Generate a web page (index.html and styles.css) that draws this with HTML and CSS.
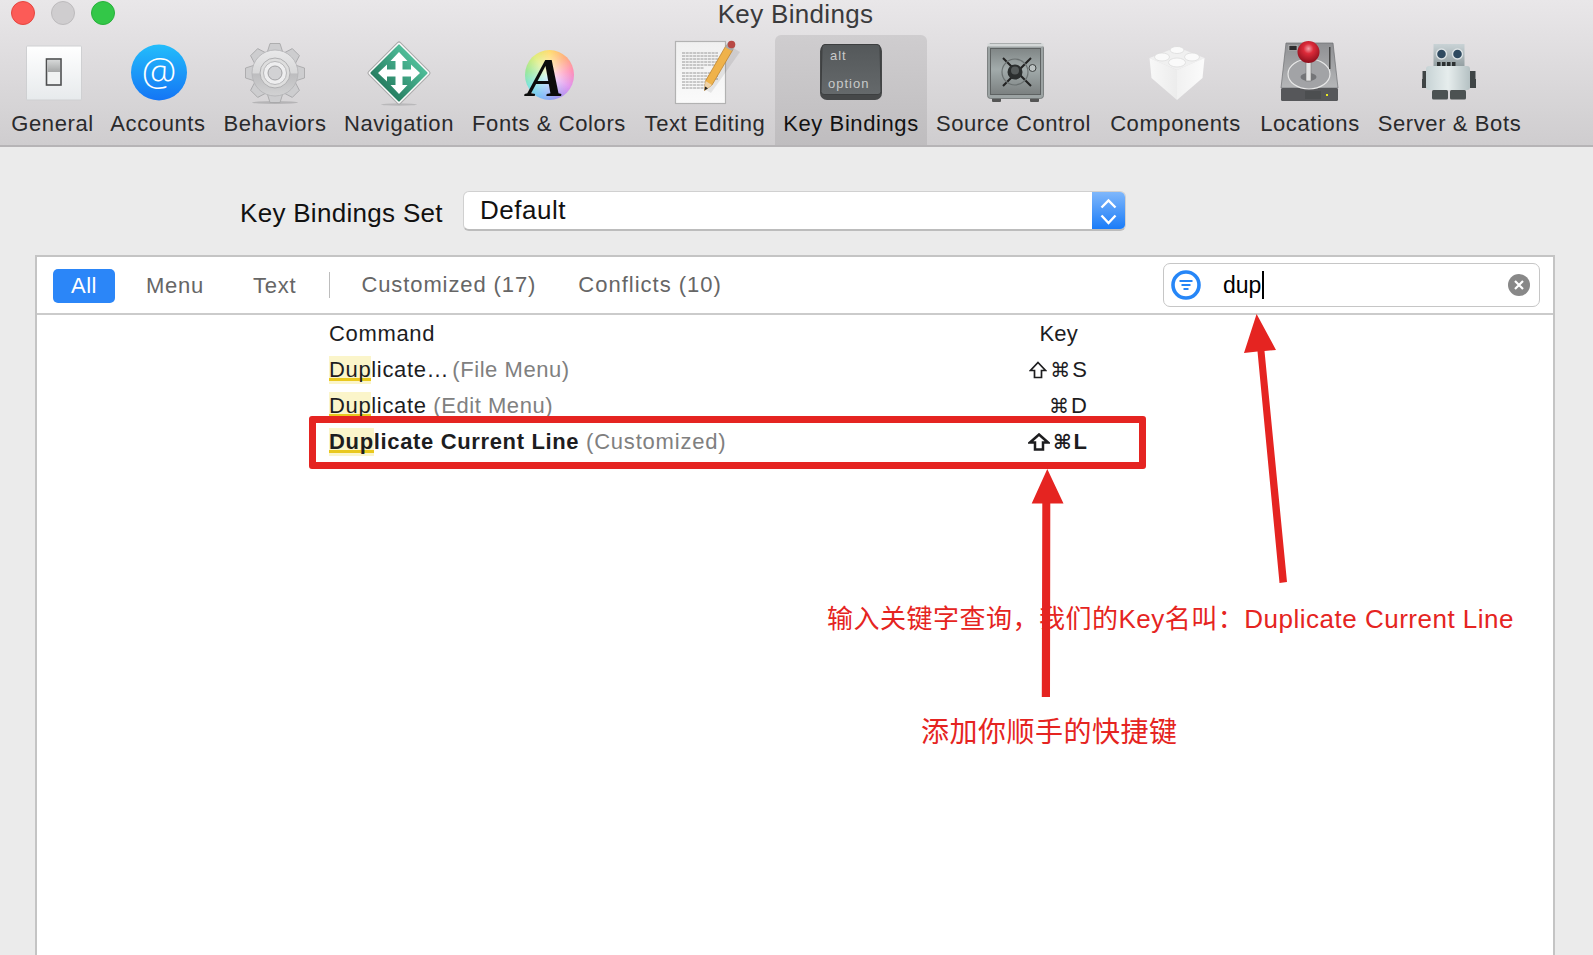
FILE: index.html
```html
<!DOCTYPE html>
<html lang="en">
<head>
<meta charset="utf-8">
<title>Key Bindings</title>
<link rel="stylesheet" href="styles.css">
</head>
<body>
<div class="window">
  <svg class="defs" width="0" height="0" aria-hidden="true">
    <defs>
      <linearGradient id="gSwitch" x1="0" y1="0" x2="0" y2="1"><stop offset="0" stop-color="#ffffff"/><stop offset="1" stop-color="#e7eaec"/></linearGradient>
      <linearGradient id="gSwitchTop" x1="0" y1="0" x2="0" y2="1"><stop offset="0" stop-color="#d6d8d8"/><stop offset="1" stop-color="#a4a6a6"/></linearGradient>
      <linearGradient id="gAt" x1="0" y1="0" x2="0" y2="1"><stop offset="0" stop-color="#23bdfb"/><stop offset="1" stop-color="#1475f5"/></linearGradient>
      <linearGradient id="gGear" x1="0" y1="0" x2="0" y2="1"><stop offset="0" stop-color="#e9e9ea"/><stop offset=".5" stop-color="#d8d8d9"/><stop offset=".52" stop-color="#bdbdbf"/><stop offset="1" stop-color="#d2d2d3"/></linearGradient>
      <linearGradient id="gNav" x1="0" y1="0" x2="0" y2="1"><stop offset="0" stop-color="#4fbc98"/><stop offset="1" stop-color="#277f62"/></linearGradient>
      <linearGradient id="gPage" x1="0" y1="0" x2="0" y2="1"><stop offset="0" stop-color="#f0f0f0"/><stop offset="1" stop-color="#fafafa"/></linearGradient>
      <linearGradient id="gKey" x1="0" y1="0" x2="0" y2="1"><stop offset="0" stop-color="#54585a"/><stop offset="1" stop-color="#65696b"/></linearGradient>
      <linearGradient id="gSafe" x1="0" y1="0" x2="0" y2="1"><stop offset="0" stop-color="#808686"/><stop offset=".45" stop-color="#a2abab"/><stop offset="1" stop-color="#7b8080"/></linearGradient>
      <linearGradient id="gBrickL" x1="0" y1="0" x2="1" y2="0"><stop offset="0" stop-color="#f8f8f8"/><stop offset="1" stop-color="#ececec"/></linearGradient>
      <linearGradient id="gBrickR" x1="0" y1="0" x2="1" y2="0"><stop offset="0" stop-color="#f1f1f1"/><stop offset="1" stop-color="#fbfbfb"/></linearGradient>
      <linearGradient id="gDisk" x1="0" y1="0" x2="0" y2="1"><stop offset="0" stop-color="#8f9093"/><stop offset="1" stop-color="#b5b6b8"/></linearGradient>
      <radialGradient id="gBall" cx=".5" cy=".35" r=".65"><stop offset="0" stop-color="#f2a0a8"/><stop offset=".35" stop-color="#dd2b3a"/><stop offset="1" stop-color="#8c0f1c"/></radialGradient>
      <linearGradient id="gRobot" x1="0" y1="0" x2="0" y2="1"><stop offset="0" stop-color="#c9d3d6"/><stop offset="1" stop-color="#8f9a9d"/></linearGradient>
      <linearGradient id="gBody" x1="0" y1="0" x2="1" y2="0"><stop offset="0" stop-color="#c7d3d5"/><stop offset=".5" stop-color="#e6eded"/><stop offset="1" stop-color="#b5c1c3"/></linearGradient>
      <symbol id="shift" viewBox="0 0 18 18"><path d="M9 1.500L16.500 9.500H12.500V16.500H5.500V9.500H1.500z" fill="none" stroke="currentColor" stroke-width="1.700"/></symbol>
      <symbol id="shiftBold" viewBox="0 0 22 18"><path d="M11 1.500L20 9.500H15V16.500H7V9.500H2z" fill="none" stroke="currentColor" stroke-width="2.500"/></symbol>
    </defs>
  </svg>

  <header class="titlebar">
    <div class="titlerow">
      <div class="lights">
        <span class="light light-red"></span>
        <span class="light light-gray"></span>
        <span class="light light-green"></span>
      </div>
      <div class="title">Key Bindings</div>
      <div></div>
    </div>
    <nav class="toolbar">
      <div class="tool tool-first">
        <svg class="icon" viewBox="0 0 70 68">
          <rect x="8.500" y="8" width="55" height="54" rx="1" fill="url(#gSwitch)" stroke="#cfd0d2"/>
          <rect x="28.500" y="21" width="14.500" height="26" fill="#f0f2f2" stroke="#4e4f50" stroke-width="1.600"/>
          <rect x="29.500" y="22" width="12.500" height="12" fill="url(#gSwitchTop)"/>
        </svg>
        <span class="tool-label">General</span>
      </div>
      <div class="tool">
        <svg class="icon" viewBox="0 0 70 68">
          <circle cx="36" cy="34.500" r="28" fill="url(#gAt)"/>
          <text class="at-sign" x="36" y="48" text-anchor="middle">@</text>
        </svg>
        <span class="tool-label">Accounts</span>
      </div>
      <div class="tool">
        <svg class="icon" viewBox="0 0 70 68">
          <ellipse cx="35" cy="64.500" rx="23" ry="1.500" fill="#b5b4b6"/>
          <g transform="translate(35 35)" fill="#cdcdcf" stroke="#a3a3a5" stroke-width=".8">
            <polygon points="-5,-29.500 5,-29.500 8,-20 -8,-20"/>
            <polygon points="-5,-29.500 5,-29.500 8,-20 -8,-20" transform="rotate(45)"/>
            <polygon points="-5,-29.500 5,-29.500 8,-20 -8,-20" transform="rotate(90)"/>
            <polygon points="-5,-29.500 5,-29.500 8,-20 -8,-20" transform="rotate(135)"/>
            <polygon points="-5,-29.500 5,-29.500 8,-20 -8,-20" transform="rotate(180)"/>
            <polygon points="-5,-29.500 5,-29.500 8,-20 -8,-20" transform="rotate(225)"/>
            <polygon points="-5,-29.500 5,-29.500 8,-20 -8,-20" transform="rotate(270)"/>
            <polygon points="-5,-29.500 5,-29.500 8,-20 -8,-20" transform="rotate(315)"/>
            <circle r="23" fill="url(#gGear)" stroke="#b3b3b5"/>
            <circle r="15" fill="#dedede" stroke="#b0b0b2" stroke-width="1"/>
            <circle r="11.500" fill="#eeeeef" stroke="#b8b8ba" stroke-width="1"/>
            <circle r="7" fill="#d2d2d4" stroke="#a2a2a4" stroke-width="1"/>
          </g>
        </svg>
        <span class="tool-label">Behaviors</span>
      </div>
      <div class="tool">
        <svg class="icon" viewBox="0 0 70 68">
          <ellipse cx="35" cy="66.500" rx="18" ry="1.200" fill="#b9b8ba"/>
          <g transform="translate(35 35)">
            <rect x="-22.500" y="-22.500" width="45" height="45" rx="2" transform="rotate(45)" fill="#fbfbfb" stroke="#a8a8a8"/>
            <rect x="-20.500" y="-20.500" width="41" height="41" rx="1" transform="rotate(45)" fill="url(#gNav)"/>
            <polygon fill="#fff" points="0,-21 8.500,-12 3.500,-12 3.500,-3.500 12,-3.500 12,-8.500 21,0 12,8.500 12,3.500 3.500,3.500 3.500,12 8.500,12 0,21 -8.500,12 -3.500,12 -3.500,3.500 -12,3.500 -12,8.500 -21,0 -12,-8.500 -12,-3.500 -3.500,-3.500 -3.500,-12 -8.500,-12"/>
          </g>
        </svg>
        <span class="tool-label">Navigation</span>
      </div>
      <div class="tool">
        <div class="font-icon"><span class="wheel"></span><span class="font-a">A</span></div>
        <span class="tool-label">Fonts &amp; Colors</span>
      </div>
      <div class="tool">
        <svg class="icon" viewBox="0 0 70 68">
          <rect x="5.500" y="3.500" width="50" height="62" fill="url(#gPage)" stroke="#b2b2b2" stroke-width="1.200"/>
          <g stroke="#8f8f8f" stroke-width=".9" stroke-dasharray="3 .7" fill="none">
            <path d="M12 15h36M12 18h36M12 21h36M12 24h36M12 27h36M12 30h22"/>
            <path d="M12 35h36M12 38h36M12 41h36M12 44h30M12 47h26M12 50h22"/>
          </g>
          <polygon points="36,52 62,9 70,14 41,55" fill="#000" opacity=".08"/>
          <polygon points="34.500,52.500 35.500,43 56,7.500 63,11.500 42,47" fill="#efb24a" stroke="#b97d25" stroke-width=".7"/>
          <polygon points="34.500,52.500 35.500,43 42,47" fill="#eed2a8"/>
          <polygon points="34.500,52.500 35,48.500 38,50.200" fill="#222"/>
          <polygon points="55,9 58,4.500 65,8.500 62,13" fill="#a9a9a9"/>
          <circle cx="61.500" cy="6.500" r="3.800" fill="#b84945"/>
        </svg>
        <span class="tool-label">Text Editing</span>
      </div>
      <div class="tool tool-active">
        <svg class="icon" viewBox="0 0 70 68">
          <rect x="4" y="6" width="62" height="56" rx="7" fill="#464849"/>
          <path d="M9 6.500h52a3 3 0 0 1 3 3l1 44a3 3 0 0 1-3 3H8a3 3 0 0 1-3-3l1-44a3 3 0 0 1 3-3z" fill="url(#gKey)" stroke="#3d3f40"/>
          <text class="key-cap" x="14" y="22">alt</text>
          <text class="key-cap" x="12" y="50">option</text>
        </svg>
        <span class="tool-label">Key Bindings</span>
      </div>
      <div class="tool">
        <svg class="icon" viewBox="0 0 70 68">
          <rect x="13" y="60" width="9" height="4" rx="1" fill="#555"/>
          <rect x="51" y="60" width="9" height="4" rx="1" fill="#555"/>
          <path d="M11 5.500h51l2.500 4v48a3 3 0 0 1-3 3H11.500a3 3 0 0 1-3-3v-48z" fill="#9ca3a3" stroke="#6d7272" stroke-width=".8"/>
          <rect x="8.500" y="5.500" width="56" height="3" fill="#d4d8d8"/>
          <rect x="11.500" y="10.500" width="50" height="46" fill="url(#gSafe)" stroke="#5e6262"/>
          <path d="M24 20l28 28M52 20L24 48" stroke="#222" stroke-width="2"/>
          <circle cx="36" cy="34" r="13" fill="none" stroke="#6a7070" stroke-width="1.200"/>
          <circle cx="36" cy="34" r="7.500" fill="#2b2e2e"/>
          <circle cx="36" cy="32.500" r="4" fill="#555a5a"/>
          <circle cx="53.500" cy="30" r="3.500" fill="#bcc3c3" stroke="#3c3f3f"/>
        </svg>
        <span class="tool-label">Source Control</span>
      </div>
      <div class="tool">
        <svg class="icon" viewBox="0 0 70 68">
          <polygon points="36,9 63.500,20 36,32 8.500,20" fill="#f0f0f0"/>
          <polygon points="8.500,20 36,32 36,62 10.500,40" fill="url(#gBrickL)"/>
          <polygon points="63.500,20 36,32 36,62 61.500,40" fill="url(#gBrickR)"/>
          <g fill="#fafafa" stroke="#dcdcdc" stroke-width=".8">
            <ellipse cx="36" cy="12" rx="7" ry="3.500"/>
            <ellipse cx="21" cy="19" rx="7.500" ry="4"/>
            <ellipse cx="51" cy="19" rx="7.500" ry="4"/>
            <ellipse cx="36" cy="24.500" rx="8.500" ry="4.500"/>
          </g>
        </svg>
        <span class="tool-label">Components</span>
      </div>
      <div class="tool">
        <svg class="icon" viewBox="0 0 70 68">
          <polygon points="11,5 58,5 63,50 6,50" fill="url(#gDisk)" stroke="#6f7072" stroke-width=".7"/>
          <rect x="6" y="50" width="57" height="13" rx="1.500" fill="#56575a"/>
          <rect x="30" y="53" width="16" height="8" fill="#2f3032"/>
          <path d="M31 53v8M33 53v8M35 53v8M37 53v8M39 53v8M41 53v8M43 53v8M45 53v8" stroke="#85868a" stroke-width=".7"/>
          <rect x="51" y="56" width="2" height="2" fill="#e8e820"/>
          <ellipse cx="34" cy="36" rx="21" ry="15" fill="#a2a3a6" stroke="#e8e8e8" stroke-width="1.200"/>
          <ellipse cx="33.500" cy="39" rx="8" ry="4" fill="#55565a" opacity=".6"/>
          <rect x="14" y="7.500" width="8" height="5" fill="#2c2c2e" stroke="#ddd" stroke-width=".5"/>
          <rect x="54" y="9" width="1.500" height="22" fill="#444"/>
          <rect x="31" y="20" width="5" height="23" fill="#e4e4e4" stroke="#777" stroke-width=".6"/>
          <circle cx="33.500" cy="14" r="11" fill="url(#gBall)"/>
        </svg>
        <span class="tool-label">Locations</span>
      </div>
      <div class="tool">
        <svg class="icon" viewBox="0 0 70 68">
          <g transform="translate(2 0)">
            <rect x="5.500" y="33" width="6" height="9" fill="#3f4546"/>
            <rect x="52.500" y="33" width="6" height="9" fill="#3f4546"/>
            <rect x="5" y="41" width="6" height="9" fill="#3f4546"/>
            <rect x="53" y="41" width="6" height="9" fill="#3f4546"/>
            <rect x="16.500" y="6" width="31" height="24" fill="url(#gRobot)"/>
            <circle cx="24.500" cy="16" r="5" fill="#2f4a60" stroke="#dde3e5" stroke-width="1.400"/>
            <circle cx="40.500" cy="16" r="5" fill="#2f4a60" stroke="#dde3e5" stroke-width="1.400"/>
            <path d="M20 24h3.500v4H20zM25 24h3.500v4H25zM30 24h3.500v4H30zM35 24h3.500v4H35z" fill="#2d3132"/>
            <rect x="9" y="28" width="44" height="24" rx="3" fill="url(#gBody)"/>
            <rect x="15" y="52" width="16" height="9.500" rx="1.500" fill="#4c5252"/>
            <rect x="33" y="52" width="16" height="9.500" rx="1.500" fill="#4c5252"/>
          </g>
        </svg>
        <span class="tool-label">Server &amp; Bots</span>
      </div>
    </nav>
  </header>

  <main class="content">
    <div class="set-row">
      <span class="set-label">Key Bindings Set</span>
      <div class="popup">
        <span class="popup-value">Default</span>
        <span class="stepper">
          <svg viewBox="0 0 33 39" width="33" height="39"><path d="M9.500 15.500l7-7 7 7M9.500 23.500l7 7.500 7-7.500" fill="none" stroke="#fff" stroke-width="2.400"/></svg>
        </span>
      </div>
    </div>

    <section class="panel">
      <div class="filterbar">
        <span class="pill">All</span>
        <span class="tab tab-menu">Menu</span>
        <span class="tab tab-text">Text</span>
        <span class="divider"></span>
        <span class="tab tab-custom">Customized (17)</span>
        <span class="tab tab-conflict">Conflicts (10)</span>
        <div class="search">
          <svg class="search-icon" viewBox="0 0 30 30" width="30" height="30">
            <circle cx="15" cy="15" r="13" fill="#fff" stroke="#2686f7" stroke-width="3.600"/>
            <path d="M8.500 11h13M10.500 15h9M12.500 19h5" stroke="#2686f7" stroke-width="2"/>
          </svg>
          <span class="search-text">dup</span><span class="caret"></span>
          <svg class="search-clear" viewBox="0 0 22 22" width="22" height="22">
            <circle cx="11" cy="11" r="11" fill="#888"/>
            <path d="M7 7l8 8M15 7l-8 8" stroke="#fff" stroke-width="2.200"/>
          </svg>
        </div>
      </div>
      <div class="table">
        <div class="row row-head"><span>Command</span><span class="key-head">Key</span></div>
        <div class="row"><span><span class="hl">Dup</span>licate<span class="dots">…</span> <span class="sub">(File Menu)</span></span><span class="key"><svg class="shift" aria-hidden="true"><use href="#shift"/></svg><span class="cmd">⌘</span><span class="letter">S</span></span></div>
        <div class="row"><span><span class="hl">Dup</span>licate <span class="sub">(Edit Menu)</span></span><span class="key"><span class="cmd">⌘</span><span class="letter">D</span></span></div>
        <div class="row row-strong"><span><span class="hl">Dup</span>licate Current Line <span class="sub">(Customized)</span></span><span class="key"><svg class="shift shift-bold" aria-hidden="true"><use href="#shiftBold"/></svg><span class="cmd">⌘</span><span class="letter">L</span></span></div>
      </div>
    </section>
  </main>

  <div class="note note-search">输入关键字查询，我们的Key名叫：Duplicate Current Line</div>
  <div class="note note-key">添加你顺手的快捷键</div>
  <div class="frame"></div>
  <svg class="arrows" width="1593" height="955" viewBox="0 0 1593 955">
    <polygon points="1256.600,314 1276,350 1264.500,351 1287,582 1279.500,583 1257.500,351.500 1244,353" fill="#e52421"/>
    <polygon points="1047.300,469 1063.500,503.500 1050.300,503.500 1050,697 1041.800,697 1042.300,503.500 1031.700,503.500" fill="#e52421"/>
  </svg>
</div>
</body>
</html>
```
FILE: styles.css
```css
* { box-sizing: border-box; }
html, body { margin: 0; padding: 0; }
body { font-family: "Liberation Sans", Arial, sans-serif; color: #1d1d1f; }
.window { position: relative; width: 1593px; height: 955px; overflow: hidden; background: #ebebeb; display: flex; flex-direction: column; }
.defs { position: absolute; }

.titlebar { height: 147px; flex: none; background: linear-gradient(#e9e7e9, #cfcdcf); border-bottom: 2px solid #b6b4b6; }
.titlerow { display: grid; grid-template-columns: 1fr auto 1fr; height: 35px; }
.lights { display: flex; gap: 16px; padding: 1px 0 0 11px; }
.light { width: 24px; height: 24px; border-radius: 50%; }
.light-red { background: #fc5b57; border: 1px solid #e5453f; }
.light-gray { background: #cfcdcf; border: 1px solid #bdbbbd; }
.light-green { background: #33c748; border: 1px solid #27b03b; }
.title { font-size: 26px; line-height: 28px; letter-spacing: .32px; color: #3a3a3c; margin-right: 2px; }

.toolbar { display: grid; grid-template-columns: 99px 114px 120px 128px 172px 140px 152px 173px 151px 118px 161px; padding-left: 2px; height: 110px; }
.tool { display: flex; flex-direction: column; align-items: center; padding-top: 3px; min-width: 0; }
.tool-first { padding-left: 2px; }
.tool-active { background: linear-gradient(#cfcdcf, #bfbdbf); border-radius: 6px 6px 0 0; }
.icon { width: 70px; height: 68px; flex: none; display: block; }
.tool-label { margin-top: 5px; font-size: 22px; line-height: 26px; letter-spacing: .6px; color: #2a2a2c; white-space: nowrap; }
.tool-active .tool-label { color: #111; }
.at-sign { font-family: "Open Sans", sans-serif; font-weight: 300; font-size: 39px; fill: #fff; }
.key-cap { font-family: "Liberation Sans", sans-serif; font-size: 13px; letter-spacing: 1px; fill: #c8caca; }

.font-icon { position: relative; width: 70px; height: 68px; flex: none; }
.wheel { position: absolute; left: 11px; top: 12px; width: 49px; height: 50px; border-radius: 50%; background: radial-gradient(circle, rgba(255,255,255,.85) 0, rgba(255,255,255,.2) 70%, rgba(255,255,255,0) 100%), conic-gradient(#ffd24a, #ff9a5a, #ff6fa0, #d877e8, #8a7cf0, #5aa8f5, #54dcd8, #7de07a, #d6e85a, #ffd24a); }
.font-a { position: absolute; left: 13px; top: 6px; font-family: "Liberation Serif", serif; font-style: italic; font-weight: 700; font-size: 55px; line-height: 68px; color: #0c0c0c; }

.content { flex: 1; display: flex; flex-direction: column; min-height: 0; }
.set-row { display: flex; align-items: flex-start; padding: 44px 0 0 240px; margin-bottom: 24px; }
.set-label { width: 223px; flex: none; font-size: 26px; line-height: 38px; letter-spacing: .3px; color: #111; padding-top: 3px; height: 40px; }
.popup { width: 663px; height: 40px; display: flex; background: #fff; border: 1px solid #d0d0d0; border-bottom: 2px solid #bcbcbc; border-radius: 6px; overflow: hidden; }
.popup-value { flex: 1; padding-left: 16px; font-size: 26px; line-height: 37px; letter-spacing: .5px; color: #111; }
.stepper { width: 33px; flex: none; background: linear-gradient(#7fb7fb, #1a7cf8); }
.stepper svg { display: block; }

.panel { margin-left: 35px; width: 1520px; flex: 1; min-height: 0; background: #fff; border: 2px solid #c4c4c4; border-bottom: 0; }
.filterbar { height: 58px; display: flex; align-items: center; padding: 0 13px 0 16px; border-bottom: 2px solid #cbcbcb; }
.pill { width: 62px; height: 34px; flex: none; margin-top: 2px; background: #2b86f8; color: #fff; border-radius: 5px; text-align: center; font-size: 22px; line-height: 34px; letter-spacing: .5px; }
.tab { font-size: 22px; line-height: 28px; color: #666; white-space: nowrap; letter-spacing: .75px; }
.tab-menu { margin: 2px 0 0 31px; }
.tab-text { margin: 2px 0 0 49px; }
.divider { width: 1px; height: 26px; flex: none; margin: 0 0 0 33px; background: #bdbdbd; }
.tab-custom { margin-left: 31px; letter-spacing: .9px; padding-bottom: 1px; }
.tab-conflict { margin-left: 42px; letter-spacing: 1px; padding-bottom: 1px; }
.search { margin-left: auto; width: 377px; height: 44px; display: flex; align-items: center; padding: 0 9px 0 7px; background: #fff; border: 1.5px solid #c6c6c6; border-radius: 7px; }
.search-icon { flex: none; }
.search-text { margin-left: 22px; font-size: 23px; line-height: 28px; color: #000; }
.caret { width: 2px; height: 28px; margin-left: 1px; background: #000; flex: none; }
.search-clear { flex: none; margin-left: auto; }

.table { padding: 1px 0 0 292px; }
.row { width: 758px; height: 36px; display: flex; justify-content: space-between; align-items: center; font-size: 22px; line-height: 28px; letter-spacing: .65px; color: #1d1d1f; white-space: nowrap; }
.hl { display: inline-block; line-height: 28px; background: linear-gradient(#fbf5ca 0 78%, #e9c81e 78% 88%, #fbf5ca 88%); }
.dots { letter-spacing: -3px; }
.sub { color: #808080; font-weight: 400; letter-spacing: .55px; }
.key { display: flex; align-items: center; letter-spacing: 0; }
.shift { width: 18px; height: 18px; margin-right: 3px; color: #1d1d1f; }
.shift-bold { width: 22px; margin-right: 3px; }
.cmd { font-family: "DejaVu Sans", sans-serif; font-size: 20px; font-weight: 400; margin-right: 2px; }
.letter { font-size: 22px; }
.key-head { letter-spacing: .2px; padding-right: 9px; }
.row-strong { font-weight: 700; letter-spacing: .65px; }
.row-strong .sub { letter-spacing: .8px; }
.row-strong .cmd { font-weight: 700; }

.frame { position: absolute; left: 309px; top: 416px; width: 837px; height: 53px; border: 7.500px solid #e52421; border-radius: 3px; }
.arrows { position: absolute; left: 0; top: 0; pointer-events: none; }
.note { position: absolute; font-family: "Liberation Sans", "Noto Sans CJK SC", sans-serif; color: #e52421; white-space: nowrap; }
.note-search { left: 827px; top: 602px; font-size: 26px; line-height: 34px; letter-spacing: .5px; }
.note-key { left: 921px; top: 714px; font-size: 28px; line-height: 38px; letter-spacing: .5px; }
```
